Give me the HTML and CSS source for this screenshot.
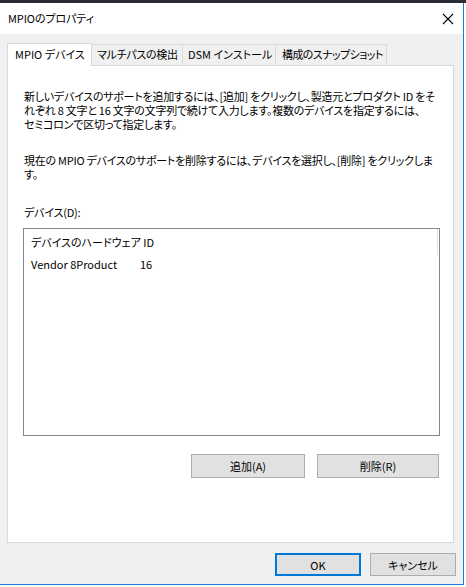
FILE: index.html
```html
<!DOCTYPE html>
<html lang="ja">
<head>
<meta charset="utf-8">
<title>MPIOのプロパティ</title>
<link rel="stylesheet" href="styles.css">
</head>
<body>
<div class="backdrop"></div>
<div class="window">
  <div class="titlebar">
    <span class="title">MPIOのプロパティ</span>
    <svg class="close" width="12" height="12" viewBox="0 0 12 12"><path d="M1 1L11 11M11 1L1 11" stroke="#000" stroke-width="1.1" fill="none"/></svg>
  </div>
  <div class="body">
    <div class="tabs">
      <div class="tab active">MPIO デバイス</div>
      <div class="tab">マルチパスの検出</div>
      <div class="tab">DSM インストール</div>
      <div class="tab">構成のスナップショット</div>
    </div>
    <div class="panel">
      <p class="para">新しいデバイスのサポートを追加するには、[追加] をクリックし、製造元とプロダクト ID をそ<br>れぞれ 8 文字と 16 文字の文字列で続けて入力します。複数のデバイスを指定するには、<br>セミコロンで区切って指定します。</p>
      <p class="para second">現在の MPIO デバイスのサポートを削除するには、デバイスを選択し、[削除] をクリックしま<br>す。</p>
      <div class="label">デバイス(D):</div>
      <div class="listbox">
        <div class="list-head">デバイスのハードウェア ID</div>
        <div class="list-row"><span class="vendor">Vendor 8Product</span><span class="num">16</span></div>
        <div class="scrollmark"></div>
      </div>
      <div class="panel-buttons">
        <button class="btn add">追加(A)</button>
        <button class="btn del">削除(R)</button>
      </div>
    </div>
    <div class="footer">
      <button class="btn ok">OK</button>
      <button class="btn cancel">キャンセル</button>
    </div>
  </div>
</div>
</body>
</html>
```
FILE: styles.css
```css
* { box-sizing: border-box; }
html, body { margin: 0; padding: 0; }
body {
  width: 466px;
  height: 587px;
  background: #ffffff;
  font-family: "Noto Sans CJK JP", "Noto Sans", sans-serif;
  font-size: 11px;
  color: #000;
  font-feature-settings: "palt";
  overflow: hidden;
}
.backdrop {
  height: 3px;
  background: #2a2d33;
}
.window {
  width: 464px;
  height: 582px;
  border-right: 1px solid #1a7fd6;
  border-bottom: 1px solid #1a7fd6;
  display: flex;
  flex-direction: column;
}
.titlebar {
  height: 31px;
  background: #fff;
  display: flex;
  align-items: center;
  padding-left: 8px;
  padding-right: 9px;
  justify-content: space-between;
}
.title { font-size: 11px; letter-spacing: -0.1px; margin-top: -1px; }
.close { margin-top: 1px; }
.body {
  flex: 1;
  background: #f0f0f0;
  padding: 8px 0 0 7px;
  display: flex;
  flex-direction: column;
}
.tabs {
  display: flex;
  align-items: flex-end;
  height: 23px;
  position: relative;
  z-index: 1;
}
.tab {
  height: 20px;
  margin-bottom: 1px;
  border: 1px solid #d9d9d9;
  border-bottom: none;
  border-left: none;
  background: #f0f0f0;
  padding: 0 0 0 5px;
  line-height: 19px;
  white-space: nowrap;
  overflow: hidden;
  letter-spacing: -0.3px;
}
.tab:nth-child(2) { width: 91px; }
.tab:nth-child(3) { width: 93px; letter-spacing: 0; }
.tab:nth-child(4) { width: 111px; letter-spacing: -0.6px; padding-left: 6px; }
.tab.active {
  height: 23px;
  margin-bottom: -1px;
  width: 85px;
  background: #fff;
  border-left: 1px solid #d9d9d9;
  padding-left: 7px;
  line-height: 21px;
  letter-spacing: 0;
}
.panel {
  width: 447px;
  height: 478px;
  background: #fff;
  border: 1px solid #d9d9d9;
  padding: 23px 0 0 16px;
  display: flex;
  flex-direction: column;
}
.para {
  margin: 0;
  line-height: 14px;
  white-space: nowrap;
  letter-spacing: -0.25px;
}
.para.second { margin-top: 22px; }
.label {
  margin-top: 24px;
  line-height: 14px;
  letter-spacing: -0.2px;
}
.listbox {
  margin-top: 9px;
  margin-left: -1px;
  width: 417px;
  height: 208px;
  border: 1px solid #828790;
  padding: 6px 0 0 7px;
  position: relative;
}
.list-head { line-height: 14px; }
.list-row {
  margin-top: 8px;
  line-height: 14px;
  display: flex;
}
.vendor { width: 109px; }
.scrollmark {
  position: absolute;
  right: 1px;
  top: 0;
  width: 1px;
  height: 26px;
  background: #e4e4e4;
}
.panel-buttons {
  display: flex;
  gap: 12px;
  margin-top: 18px;
  margin-left: 167px;
}
.btn {
  font-family: inherit;
  font-size: 11px;
  font-feature-settings: "palt";
  color: #000;
  background: #e1e1e1;
  border: 1px solid #adadad;
  padding: 0;
  margin: 0;
  height: 24px;
  line-height: 20px;
}
.btn.add { width: 114px; }
.btn.del { width: 122px; }
.footer {
  display: flex;
  gap: 9px;
  margin-top: 10px;
  margin-left: 268px;
}
.btn.ok, .btn.cancel {
  width: 86px;
  height: 23px;
}
.btn.ok {
  border: 2px solid #0078d7;
}
```
